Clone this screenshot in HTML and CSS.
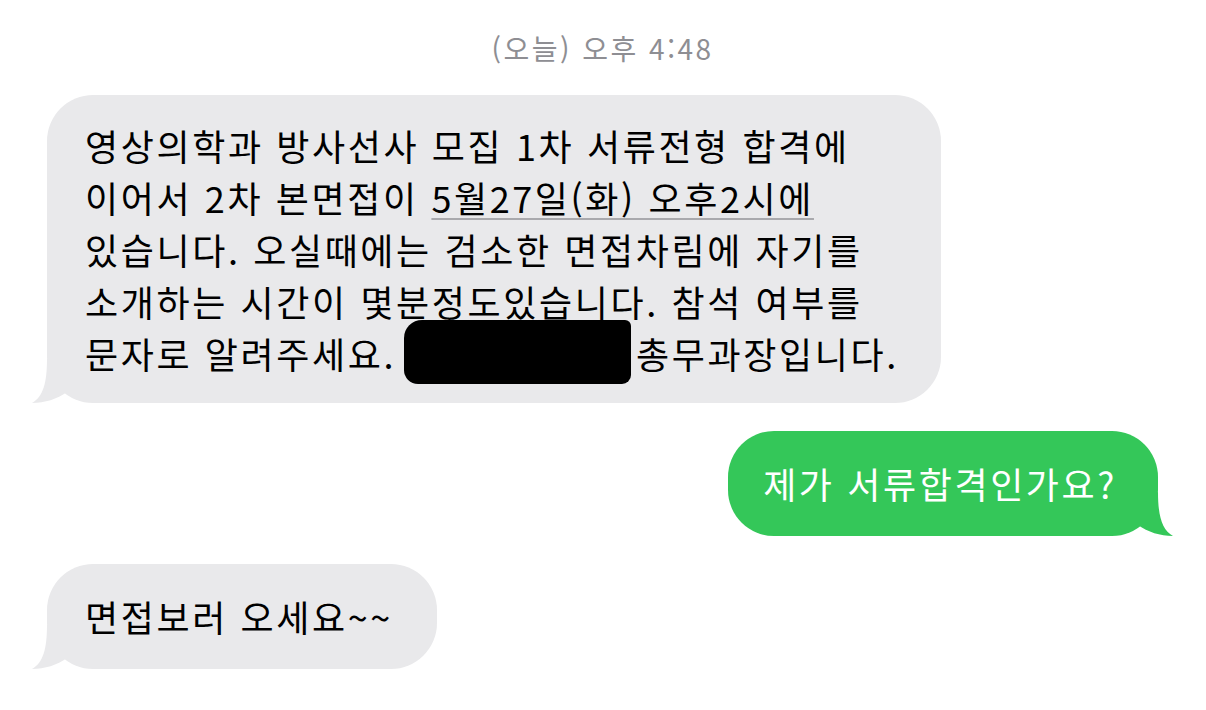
FILE: index.html
```html
<!DOCTYPE html>
<html lang="ko">
<head>
    <meta charset="UTF-8">
    <meta name="viewport" content="width=device-width, initial-scale=1.0">
    <title>메시지</title>
    <link rel="stylesheet" href="styles.css">
</head>
<body>
    <div class="thread">
        <p class="stamp">(오늘) 오후 4:48</p>

        <div class="row in">
            <div class="bubble gray long">
                영상의학과 방사선사 모집 1차 서류전형 합격에<br>
                이어서 2차 본면접이 <span class="link">5월27일(화) 오후2시에</span><br>
                있습니다. 오실때에는 검소한 면접차림에 자기를<br>
                소개하는 시간이 몇분정도있습니다. 참석 여부를<br>
                문자로 알려주세요.<span class="redact"></span>총무과장입니다.
                <svg class="tail" viewBox="0 0 40 44" width="40" height="44"><path d="M16 0 C16 24 12 38 1 44 C14 44 26 40 36 33 L36 16 Z"/></svg>
            </div>
        </div>

        <div class="row out">
            <div class="bubble green">
                제가 서류합격인가요?
                <svg class="tail" viewBox="0 0 40 44" width="40" height="44"><path d="M16 0 C16 24 12 38 1 44 C14 44 26 40 36 33 L36 16 Z"/></svg>
            </div>
        </div>

        <div class="row in">
            <div class="bubble gray">
                면접보러 오세요~~
                <svg class="tail" viewBox="0 0 40 44" width="40" height="44"><path d="M16 0 C16 24 12 38 1 44 C14 44 26 40 36 33 L36 16 Z"/></svg>
            </div>
        </div>
    </div>
</body>
</html>
```

FILE: styles.css
```css
* {
    box-sizing: border-box;
    margin: 0;
    padding: 0;
}
body {
    width: 1206px;
    height: 710px;
    background: #ffffff;
    font-family: "Noto Sans CJK KR", "Noto Sans", sans-serif;
    overflow: hidden;
}
.thread {
    display: flex;
    flex-direction: column;
    padding: 30px 48px 0 47px;
}
.stamp {
    text-align: center;
    font-size: 28px;
    line-height: 36px;
    letter-spacing: 2.5px;
    color: #8e8e93;
    margin-bottom: 29px;
}
.row {
    display: flex;
    margin-bottom: 28px;
}
.row.in {
    justify-content: flex-start;
}
.row.out {
    justify-content: flex-end;
}
.bubble {
    position: relative;
    font-size: 36px;
    line-height: 52px;
    letter-spacing: 2.6px;
    border-radius: 46px;
    padding: 26px 44px 27px 38px;
}
.bubble.gray {
    background: #e9e9eb;
    color: #000000;
}
.bubble.gray .tail {
    fill: #e9e9eb;
    left: -16px;
}
.bubble.long {
    padding: 24px 42px 24px 38px;
}
.bubble.green {
    background: #34c759;
    color: #ffffff;
    padding: 26px 41px 27px 35px;
}
.bubble.green .tail {
    fill: #34c759;
    right: -16px;
    transform: scaleX(-1);
}
.tail {
    position: absolute;
    bottom: 0;
}
.link {
    text-decoration: underline;
    text-decoration-color: #a9a9ad;
    text-decoration-thickness: 2px;
    text-underline-offset: 5px;
}
.redact {
    display: inline-block;
    vertical-align: top;
    width: 227px;
    height: 64px;
    margin: -7px 5px -5px 8px;
    background: #000000;
    border-radius: 18px 6px 9px 14px;
}
```
